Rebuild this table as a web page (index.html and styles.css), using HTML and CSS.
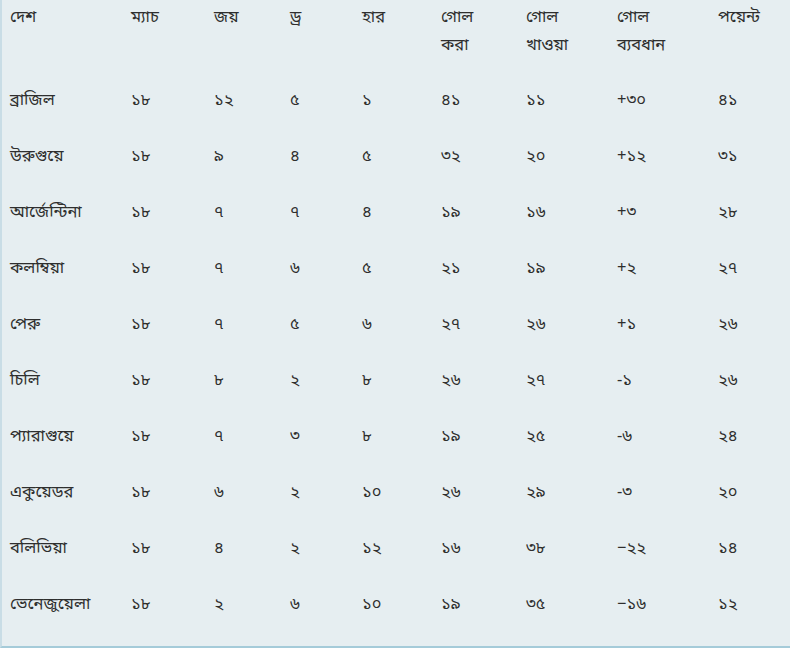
FILE: index.html
```html
<!DOCTYPE html>
<html lang="bn">
<head>
<meta charset="utf-8">
<link rel="stylesheet" href="styles.css">
</head>
<body>
<div class="board">
  <div class="row head">
    <div>দেশ</div><div>ম্যাচ</div><div>জয়</div><div>ড্র</div><div>হার</div><div>গোল<br>করা</div><div>গোল<br>খাওয়া</div><div>গোল<br>ব্যবধান</div><div>পয়েন্ট</div>
  </div>
  <div class="row"><div>ব্রাজিল</div><div>১৮</div><div>১২</div><div>৫</div><div>১</div><div>৪১</div><div>১১</div><div>+৩০</div><div>৪১</div></div>
  <div class="row"><div>উরুগুয়ে</div><div>১৮</div><div>৯</div><div>৪</div><div>৫</div><div>৩২</div><div>২০</div><div>+১২</div><div>৩১</div></div>
  <div class="row"><div>আর্জেন্টিনা</div><div>১৮</div><div>৭</div><div>৭</div><div>৪</div><div>১৯</div><div>১৬</div><div>+৩</div><div>২৮</div></div>
  <div class="row"><div>কলম্বিয়া</div><div>১৮</div><div>৭</div><div>৬</div><div>৫</div><div>২১</div><div>১৯</div><div>+২</div><div>২৭</div></div>
  <div class="row"><div>পেরু</div><div>১৮</div><div>৭</div><div>৫</div><div>৬</div><div>২৭</div><div>২৬</div><div>+১</div><div>২৬</div></div>
  <div class="row"><div>চিলি</div><div>১৮</div><div>৮</div><div>২</div><div>৮</div><div>২৬</div><div>২৭</div><div>-১</div><div>২৬</div></div>
  <div class="row"><div>প্যারাগুয়ে</div><div>১৮</div><div>৭</div><div>৩</div><div>৮</div><div>১৯</div><div>২৫</div><div>-৬</div><div>২৪</div></div>
  <div class="row"><div>একুয়েডর</div><div>১৮</div><div>৬</div><div>২</div><div>১০</div><div>২৬</div><div>২৯</div><div>-৩</div><div>২০</div></div>
  <div class="row"><div>বলিভিয়া</div><div>১৮</div><div>৪</div><div>২</div><div>১২</div><div>১৬</div><div>৩৮</div><div>−২২</div><div>১৪</div></div>
  <div class="row"><div>ভেনেজুয়েলা</div><div>১৮</div><div>২</div><div>৬</div><div>১০</div><div>১৯</div><div>৩৫</div><div>−১৬</div><div>১২</div></div>
</div>
</body>
</html>
```

FILE: styles.css
```css
html, body {
  margin: 0;
  padding: 0;
  background: #ffffff;
}
body {
  font-family: "Noto Sans Bengali", "Vrinda", "Noto Sans", "DejaVu Sans", sans-serif;
  font-size: 16.5px;
  color: #2e2e2e;
}
.board {
  width: 790px;
  box-sizing: border-box;
  background: #e6eef1;
  border-left: 2px solid #c9dde6;
  border-bottom: 2px solid #a5cbd9;
  padding: 0 0 13px 8px;
}
.row {
  display: grid;
  grid-template-columns: 121px 83px 76px 72px 79px 85px 91px 101px 1fr;
  height: 56px;
  align-items: center;
  line-height: 28px;
}
.row.head {
  height: 73px;
  align-items: start;
  padding-top: 4px;
  box-sizing: border-box;
}
```
